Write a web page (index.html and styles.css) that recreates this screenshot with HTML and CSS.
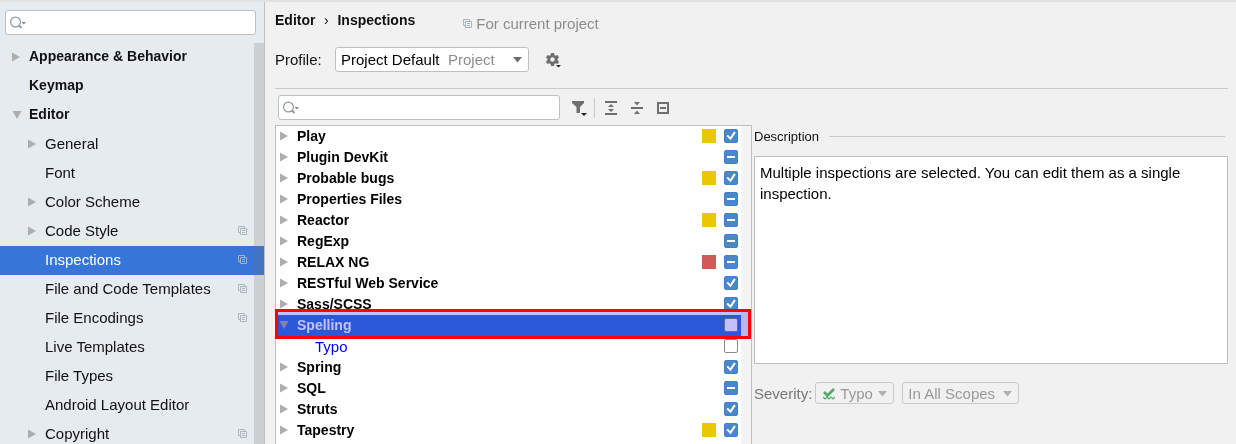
FILE: index.html
```html
<!DOCTYPE html>
<html lang="en">
<head>
<meta charset="utf-8">
<title>Settings</title>
<link rel="stylesheet" href="styles.css">
</head>
<body>
<svg class="sprite" aria-hidden="true">
  <symbol id="right" viewBox="0 0 8 10"><path d="M0 0.500L8 5L0 9.500z" fill="currentColor"/></symbol>
  <symbol id="down" viewBox="0 0 10 8"><path d="M0.500 0H9.500L5 8z" fill="currentColor"/></symbol>
  <symbol id="search" viewBox="0 0 16 14"><g fill="none" stroke="#8d9aa1" stroke-width="1.200"><circle cx="5.500" cy="6" r="4.900"/><path d="M9 9.500L11.500 12" stroke-width="1.800"/></g><path d="M11.500 6h4.500l-2.250 2.600z" fill="#7f8b91"/></symbol>
  <symbol id="copy" viewBox="0 0 9 9"><path d="M2 6.500H0.500V0.500H6.500V2M2.500 2.500H8.500V8.500H2.500zM4 4.500H7M4 6.500H7" fill="none" stroke="currentColor"/></symbol>
</svg>
<div class="window">
  <nav class="sidebar" aria-label="Settings">
    <div class="search side-search"><svg width="16" height="14" aria-hidden="true"><use href="#search"/></svg><input type="search" aria-label="Search settings"></div>
    <div class="side-body">
      <ul class="nav-list">
        <li class="nav top"><span class="arrow"><svg width="8" height="10"><use href="#right"/></svg></span><a href="#">Appearance &amp; Behavior</a></li>
        <li class="nav top"><span class="arrow"></span><a href="#">Keymap</a></li>
        <li class="nav top"><span class="arrow"><svg width="10" height="8"><use href="#down"/></svg></span><a href="#">Editor</a></li>
        <li class="nav"><span class="arrow"><svg width="8" height="10"><use href="#right"/></svg></span><a href="#">General</a></li>
        <li class="nav"><span class="arrow"></span><a href="#">Font</a></li>
        <li class="nav"><span class="arrow"><svg width="8" height="10"><use href="#right"/></svg></span><a href="#">Color Scheme</a></li>
        <li class="nav"><span class="arrow"><svg width="8" height="10"><use href="#right"/></svg></span><a href="#">Code Style</a><svg class="copy" width="9" height="9"><use href="#copy"/></svg></li>
        <li class="nav current"><span class="arrow"></span><a href="#" aria-current="page">Inspections</a><svg class="copy" width="9" height="9"><use href="#copy"/></svg></li>
        <li class="nav"><span class="arrow"></span><a href="#">File and Code Templates</a><svg class="copy" width="9" height="9"><use href="#copy"/></svg></li>
        <li class="nav"><span class="arrow"></span><a href="#">File Encodings</a><svg class="copy" width="9" height="9"><use href="#copy"/></svg></li>
        <li class="nav"><span class="arrow"></span><a href="#">Live Templates</a></li>
        <li class="nav"><span class="arrow"></span><a href="#">File Types</a></li>
        <li class="nav"><span class="arrow"></span><a href="#">Android Layout Editor</a></li>
        <li class="nav"><span class="arrow"><svg width="8" height="10"><use href="#right"/></svg></span><a href="#">Copyright</a><svg class="copy" width="9" height="9"><use href="#copy"/></svg></li>
      </ul>
      <div class="side-scroll"></div>
    </div>
  </nav>
  <main class="main">
    <header class="crumbs">
      <h1 class="path"><span>Editor</span><span class="sep">›</span><span>Inspections</span></h1>
      <p class="scope"><svg class="copy" width="9" height="9"><use href="#copy"/></svg>For current project</p>
    </header>
    <div class="profile">
      <label class="profile-label" for="profile">Profile:</label>
      <span class="combo profile-combo">
        <select id="profile"><option>Project Default</option></select>
        <span class="hint">Project</span>
        <svg class="chevron" width="9" height="6"><path d="M0 0H9L4.500 5.500z" fill="#6e6e6e"/></svg>
      </span>
      <button class="tool gear" type="button" aria-label="Profile actions"><svg width="16" height="16" viewBox="0 0 16 16"><path fill="#6e6e6e" fill-rule="evenodd" d="M5 1h3l.4 2 1.300.7 1.900-.6 1.400 2.400L11.600 6.800v1.400l1.400 1.300-1.400 2.400-1.900-.6-1.300.7L8 14H5l-.4-2-1.300-.7-1.900.6L0 9.500l1.400-1.300V6.800L0 5.500l1.400-2.400 1.900.6L4.600 3zM6.500 5.200a2.300 2.300 0 1 0 0 4.600a2.300 2.300 0 1 0 0-4.600z"/><path d="M10 13h5l-2.500 2.500z" fill="#222"/></svg></button>
    </div>
    <div class="split">
      <section class="left">
        <div class="toolbar">
          <div class="search list-search"><svg width="16" height="14" aria-hidden="true"><use href="#search"/></svg><input type="search" aria-label="Search inspections"></div>
          <button class="tool filter" type="button" aria-label="Filter"><svg width="16" height="16" viewBox="0 0 16 16"><path d="M0 1H12V3L8 7V13H4.500V7L0 3z" fill="#6e6e6e"/><path d="M9 13h6l-3 3z" fill="#222"/></svg></button>
          <span class="divider"></span>
          <button class="tool" type="button" aria-label="Expand all"><svg width="12" height="14"><path d="M0 0H12V2H0zM0 12H12V14H0zM6 3L9 6H3zM6 11L9 8H3z" fill="#6e6e6e"/></svg></button>
          <button class="tool" type="button" aria-label="Collapse all"><svg width="12" height="12"><path d="M0 5H12V7H0zM6 3.500L9 0H3zM6 8.500L9 12H3z" fill="#6e6e6e"/></svg></button>
          <button class="tool" type="button" aria-label="Reset"><svg width="12" height="12"><path d="M1 1H11V11H1zM3 6H9" fill="none" stroke="#6e6e6e" stroke-width="2"/></svg></button>
        </div>
        <div class="tree-box">
          <ul class="tree">
            <li class="row"><svg width="8" height="10"><use href="#right"/></svg><label for="c1">Play</label><i class="mark yellow"></i><input id="c1" type="checkbox" checked></li>
            <li class="row"><svg width="8" height="10"><use href="#right"/></svg><label for="c2">Plugin DevKit</label><input id="c2" class="partial" type="checkbox" checked></li>
            <li class="row"><svg width="8" height="10"><use href="#right"/></svg><label for="c3">Probable bugs</label><i class="mark yellow"></i><input id="c3" type="checkbox" checked></li>
            <li class="row"><svg width="8" height="10"><use href="#right"/></svg><label for="c4">Properties Files</label><input id="c4" class="partial" type="checkbox" checked></li>
            <li class="row"><svg width="8" height="10"><use href="#right"/></svg><label for="c5">Reactor</label><i class="mark yellow"></i><input id="c5" class="partial" type="checkbox" checked></li>
            <li class="row"><svg width="8" height="10"><use href="#right"/></svg><label for="c6">RegExp</label><input id="c6" class="partial" type="checkbox" checked></li>
            <li class="row"><svg width="8" height="10"><use href="#right"/></svg><label for="c7">RELAX NG</label><i class="mark red"></i><input id="c7" class="partial" type="checkbox" checked></li>
            <li class="row"><svg width="8" height="10"><use href="#right"/></svg><label for="c8">RESTful Web Service</label><input id="c8" type="checkbox" checked></li>
            <li class="row"><svg width="8" height="10"><use href="#right"/></svg><label for="c9">Sass/SCSS</label><input id="c9" type="checkbox" checked></li>
            <li class="row selected"><svg width="10" height="8"><use href="#down"/></svg><label for="c10">Spelling</label><input id="c10" type="checkbox"><span class="highlight"></span><span class="frame"></span></li>
            <li class="row child"><label for="c11">Typo</label><input id="c11" type="checkbox"></li>
            <li class="row"><svg width="8" height="10"><use href="#right"/></svg><label for="c12">Spring</label><input id="c12" type="checkbox" checked></li>
            <li class="row"><svg width="8" height="10"><use href="#right"/></svg><label for="c13">SQL</label><input id="c13" class="partial" type="checkbox" checked></li>
            <li class="row"><svg width="8" height="10"><use href="#right"/></svg><label for="c14">Struts</label><input id="c14" type="checkbox" checked></li>
            <li class="row"><svg width="8" height="10"><use href="#right"/></svg><label for="c15">Tapestry</label><i class="mark yellow"></i><input id="c15" type="checkbox" checked></li>
          </ul>
          <div class="tree-scroll"></div>
        </div>
      </section>
      <section class="right">
        <h2 class="heading">Description</h2>
        <p class="description">Multiple inspections are selected. You can edit them as a single inspection.</p>
        <div class="severity">
          <label for="severity">Severity:</label>
          <span class="combo small level">
            <svg class="typo-icon" width="12" height="13"><path d="M1 4L4.500 7.500L11 1" fill="none" stroke="#59a869" stroke-width="2.800"/><path d="M0 9L2 11L4 9L6 11L8 9L10 11L12 9" fill="none" stroke="#59a869" stroke-width="1.200"/></svg>
            <select id="severity" disabled><option>Typo</option></select>
            <svg class="chevron" width="9" height="6"><path d="M0 0H9L4.500 5.500z" fill="#b0b0b0"/></svg>
          </span>
          <span class="combo small scopes">
            <select aria-label="Scope" disabled><option>In All Scopes</option></select>
            <svg class="chevron" width="9" height="6"><path d="M0 0H9L4.500 5.500z" fill="#b0b0b0"/></svg>
          </span>
        </div>
      </section>
    </div>
  </main>
</div>
</body>
</html>
```
FILE: styles.css
```css
* { box-sizing: border-box; }
body, h1, h2, p, ul { margin: 0; padding: 0; }
ul { list-style: none; }
svg { display: block; flex: none; }
body {
  font: 15px/21px "Liberation Sans", Arial, sans-serif;
  color: #111;
  background: #f1f1f1;
}
input, select, button { font: inherit; margin: 0; }
.sprite { position: absolute; width: 0; height: 0; }
.window {
  display: flex;
  height: 100vh;
  overflow: hidden;
  border-top: 2px solid #e2e2e2;
}

/* Sidebar */
.sidebar {
  flex: none;
  width: 265px;
  display: flex;
  flex-direction: column;
  background: #e6ebef;
  border-right: 1px solid #c0c0c0;
}
.search {
  display: flex;
  align-items: center;
  height: 25px;
  padding-left: 4px;
  background: #fff;
  border: 1px solid #bfbfbf;
  border-radius: 3px;
}
.search input {
  flex: 1;
  min-width: 0;
  border: 0;
  outline: 0;
  background: none;
}
.side-search { margin: 8px 8px 8px 5px; flex: none; }
.side-body { position: relative; flex: 1; min-height: 0; overflow: hidden; }
.side-scroll {
  position: absolute;
  top: 0;
  right: 0;
  bottom: 0;
  width: 10px;
  background: rgba(115, 115, 115, 0.22);
}
.nav {
  display: flex;
  align-items: center;
  height: 29px;
  padding: 0 17px 2px 28px;
}
.nav.top { padding-left: 12px; font-size: 14px; font-weight: bold; }
.arrow { width: 17px; flex: none; color: #adadad; }
.nav a { flex: 1; color: inherit; text-decoration: none; white-space: nowrap; }
.copy { color: #a9b6be; }
.current { background: #3875d8; color: #fff; }

/* Main pane */
.main {
  flex: 1;
  min-width: 0;
  display: flex;
  flex-direction: column;
  padding: 0 8px 0 10px;
}
.crumbs { display: flex; align-items: flex-start; padding-top: 8px; }
.path { display: flex; font-size: 14px; line-height: 21px; }
.sep { width: 22px; text-align: center; font-weight: normal; }
.scope {
  display: flex;
  align-items: center;
  gap: 4px;
  padding: 3px 0 0 48px;
  color: #8c8c8c;
}
.profile {
  display: flex;
  align-items: center;
  padding: 13px 0 16px;
  border-bottom: 1px solid #c9c9c9;
}
.profile-label { width: 60px; }
.combo { position: relative; display: flex; }
.combo select {
  appearance: none;
  width: 100%;
  height: 25px;
  padding: 0 5px;
  color: #000;
  background: #fff;
  border: 1px solid #bfbfbf;
  border-radius: 3px;
  opacity: 1;
}
.chevron { position: absolute; right: 7px; top: 10px; pointer-events: none; }
.profile-combo { width: 194px; }
.hint { position: absolute; left: 113px; top: 2px; color: #8c8c8c; pointer-events: none; }
.tool { border: 0; padding: 0; background: none; }
.gear { margin-left: 17px; }
.split {
  flex: 1;
  min-height: 0;
  display: grid;
  grid-template-columns: 477fr 474fr;
  gap: 2px;
}
.left { display: flex; flex-direction: column; min-width: 0; min-height: 0; }
.toolbar { display: flex; align-items: center; gap: 14px; padding: 6px 83px 5px 3px; }
.list-search { flex: 1; }
.filter { margin: 0 -8px 0 -2px; }
.divider { width: 1px; height: 20px; background: #c9c9c9; margin-right: -4px; }
.tree-box {
  position: relative;
  flex: 1;
  min-height: 0;
  display: flex;
  background: #fff;
  border: 1px solid #bfbfbf;
  border-bottom: 0;
}
.tree { flex: 1; }
.tree-scroll { width: 10px; background: #f4f4f4; }
.row {
  display: flex;
  align-items: center;
  height: 21px;
  padding: 0 3px 1px 4px;
  font-size: 14px;
  font-weight: bold;
  color: #adadad;
}
.row label { margin-left: 9px; flex: 1; color: #000; }
.mark { width: 14px; height: 14px; margin-right: 8px; }
.yellow { background: #ebc700; }
.red { background: #cf5b56; }
.row input {
  appearance: none;
  display: grid;
  place-items: center;
  width: 14px;
  height: 14px;
  border: 1px solid #8a8a8a;
  border-radius: 2px;
  background: #fff;
}
.row input:checked { background: #4a88c7; border-color: #3f7fcb; }
.row input:checked::before {
  content: "";
  width: 10px;
  height: 10px;
  background: #fff;
  clip-path: polygon(5% 50%, 20% 38%, 42% 62%, 80% 4%, 98% 14%, 46% 92%);
}
.row input.partial:checked::before { width: 8px; height: 2px; clip-path: none; }
.child { padding-left: 30px; font-size: 15px; font-weight: normal; }
.child label { color: #00f; }
.selected { position: relative; background: #3875d8; }
.selected svg { margin: 0 -1px; }
.selected label { color: #fff; }
.highlight, .frame { position: absolute; top: -6px; right: -10px; bottom: -3px; left: -1px; }
.highlight { background: #c0c0ff; mix-blend-mode: multiply; }
.frame { border: 3px solid #f00; }

/* Details */
.right { min-width: 0; }
.heading {
  display: flex;
  align-items: center;
  gap: 10px;
  margin: 37px 3px 9px 0;
  font-size: 13px;
  font-weight: normal;
}
.heading::after { content: ""; flex: 1; height: 1px; background: #c9c9c9; }
.description {
  min-height: 208px;
  padding: 5px;
  color: #000;
  background: #fff;
  border: 1px solid #bfbfbf;
}
.severity { display: flex; align-items: center; padding-top: 18px; color: #777; }
.small select { height: 22px; color: #999; background: #f1f1f1; border-color: #c9c9c9; }
.small .chevron { top: 9px; }
.level { width: 79px; margin: 0 8px 0 3px; }
.level select { padding-left: 24px; }
.typo-icon { position: absolute; left: 8px; top: 6px; }
.scopes { width: 117px; }
```
